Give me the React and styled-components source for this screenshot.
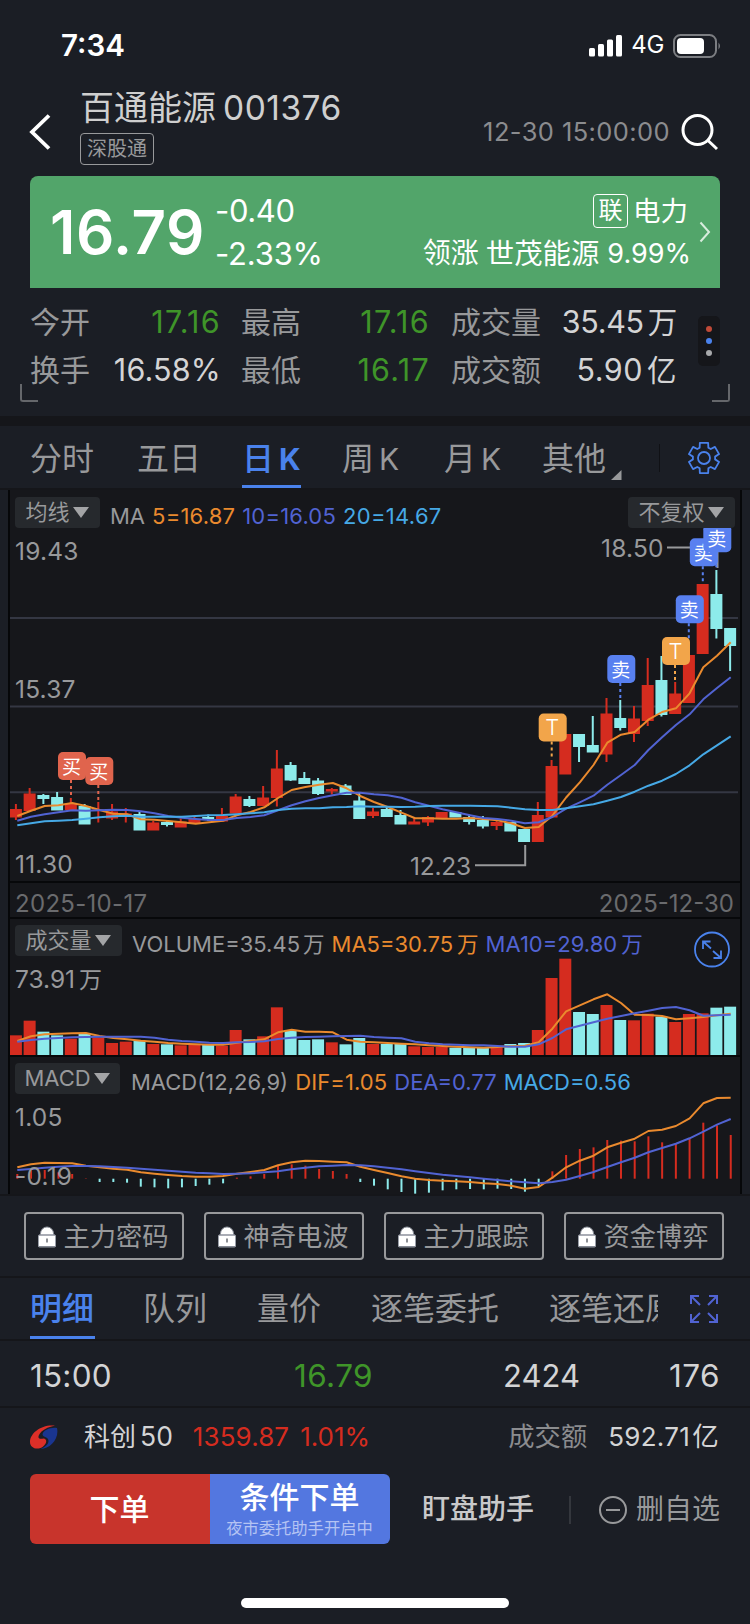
import React from 'react';
import styled, { createGlobalStyle } from 'styled-components';

const GlobalStyle = createGlobalStyle`
  * {
    box-sizing: border-box;
  }

  body {
    margin: 0;
    background: #1b1e25;
    font-family: Inter, "Noto Sans CJK SC", sans-serif;
  }
`;

const RED = '#d52c1f';
const CYAN = '#8debeb';
const ORANGE = '#ea8a2e';
const INDIGO = '#5163d2';
const SKY = '#46a9e6';

const Screen = styled.div`
  width: 750px;
  height: 1624px;
  overflow: hidden;
  background: #1b1e25;
  color: #d4d4d5;
  white-space: nowrap;
`;

const Text = styled.span`
  margin-left: ${p => p.$left || 0}px;
  margin-right: ${p => p.$right || 0}px;
  color: ${p => p.$color || 'inherit'};
  font-size: ${p => p.$size || 26}px;
  font-weight: ${p => p.$weight || 400};
  letter-spacing: ${p => p.$ls || 0}px;
  line-height: 1.2;
`;

const Unit = styled.span`
  margin-left: ${p => p.$left || 4}px;
  font-size: ${p => p.$size || 30}px;
`;

/* ---------- status bar + title ---------- */

const StatusBar = styled.div`
  display: flex;
  align-items: center;
  height: 88px;
  padding: 3px 28px 0 61px;
  color: #fff;

  svg {
    display: block;
  }
`;

const Spacer = styled.div`
  flex: 1;
`;

const TitleBar = styled.header`
  display: flex;
  align-items: center;
  height: 88px;
  padding: 0 31px 0 29px;
`;

const TitleBlock = styled.div`
  display: flex;
  flex-direction: column;
  align-items: flex-start;
  width: 290px;
  height: 88px;
  margin-left: 27px;
`;

const StockName = styled.h1`
  display: flex;
  align-items: center;
  gap: 7px;
  height: 41px;
  margin: 0 0 4px;
  color: #cfcfcf;
`;

const Tag = styled.span`
  display: flex;
  align-items: center;
  justify-content: center;
  width: 74px;
  height: 32px;
  border: 1px solid #98999b;
  border-radius: 4px;
  color: #98999b;
  font-size: 20px;
  line-height: 30px;
`;

/* ---------- quote ---------- */

const QuoteCard = styled.section`
  display: flex;
  align-items: center;
  height: 112px;
  margin: 0 30px;
  padding: 0 9px 0 20px;
  border-radius: 8px 8px 0 0;
  background: #52a56a;
  color: #fff;
`;

const Stack = styled.div`
  display: flex;
  flex-direction: column;
  align-items: ${p => (p.$end ? 'flex-end' : 'flex-start')};
  gap: 3px;
  height: 84px;
  margin-left: ${p => p.$left || 0}px;
  padding-top: 1px;
`;

const QuoteLine = styled.div`
  display: flex;
  align-items: center;
  gap: ${p => p.$gap || 0}px;
  height: 40px;
`;

const LinkBox = styled.span`
  display: flex;
  align-items: center;
  justify-content: center;
  width: 35px;
  height: 34px;
  border: 1px solid #fff;
  border-radius: 4px;
  font-size: 24px;
  line-height: 30px;
`;

const Chevron = styled.svg`
  margin-left: 8px;
`;

const Stats = styled.section`
  display: grid;
  grid-template-columns: 190px 21px 188px 22px 226px 21px 22px;
  height: 128px;
  padding: 10px 30px 0;
  grid-template-rows: 48px 48px;
`;

const Stat = styled.div`
  display: flex;
  align-items: center;
  justify-content: space-between;
  height: 48px;
  grid-column: ${p => p.$col};
`;

const MoreDots = styled.div`
  display: flex;
  flex-direction: column;
  align-items: center;
  justify-content: space-evenly;
  grid-column: 7;
  grid-row: 1 / 3;
  width: 22px;
  height: 50px;
  padding: 4px 0;
  margin-top: 18px;
  border-radius: 5px;
  background: #15161a;
`;

const Dot = styled.i`
  width: 6px;
  height: 6px;
  border-radius: 50%;
  background: ${p => p.$color};
`;

const Corners = styled.div`
  display: flex;
  justify-content: space-between;
  height: 18px;
  margin: -32px 20px 14px;
`;

const Corner = styled.i`
  width: 18px;
  height: 18px;
  border: 2px solid #65676b;
  border-top: 0;
  ${p => (p.$right ? 'border-left: 0; border-radius: 0 0 3px 0;' : 'border-right: 0; border-radius: 0 0 0 3px;')}
`;

const Band = styled.div`
  height: ${p => p.$h}px;
  background: #15161a;
`;

/* ---------- tabs ---------- */

const Tabs = styled.nav`
  display: flex;
  align-items: stretch;
  height: ${p => p.$h}px;
  padding-left: 30px;
`;

const Tab = styled.div`
  display: flex;
  align-items: center;
  gap: 5px;
  width: ${p => p.$w}px;
  margin-right: ${p => p.$gap || 0}px;
  padding-top: ${p => p.$top || 3}px;
  overflow: ${p => (p.$clip ? 'hidden' : 'visible')};
  border-bottom: 3px solid ${p => (p.$on ? '#4a82ec' : 'transparent')};
  color: ${p => (p.$on ? '#4a82ec' : '#98999b')};
  font-size: 32px;
  font-weight: ${p => (p.$on ? 500 : 400)};
  line-height: 40px;

  span {
    font-size: 30px;
    font-weight: ${p => (p.$on ? 700 : 400)};
  }
`;

const TabDivider = styled.i`
  width: 1px;
  height: 28px;
  margin: 18px 27px 0 37px;
  background: #101115;
`;

const TabIcon = styled.div`
  display: flex;
  align-items: center;
  margin-left: ${p => p.$left || 0}px;
  padding-top: ${p => p.$top || 0}px;
`;

/* ---------- charts ---------- */

const ChartBox = styled.section`
  margin: 0 8px;
  border: solid #060709;
  border-width: 0 2px;
  background: #16171b;
`;

const Pane = styled.div`
  display: grid;
  height: ${p => p.$h}px;
  overflow: hidden;
  border-bottom: ${p => (p.$last ? 0 : 2)}px solid #07080a;

  > * {
    grid-area: 1 / 1;
  }
`;

const PaneHead = styled.div`
  display: flex;
  align-items: center;
  height: 31px;
  margin-top: ${p => p.$top || 6}px;
  padding: 0 5px;
  z-index: 1;
`;

const Pill = styled.span`
  display: flex;
  align-items: center;
  justify-content: center;
  gap: 3px;
  width: ${p => p.$w}px;
  height: 31px;
  padding: 0 1px 1px 0;
  border-radius: 4px;
  background: #26292d;
  color: #98999b;
  font-size: 22px;
  line-height: 28px;

  &::after {
    content: "";
    border: solid transparent;
    border-width: 11px 8px 0;
    border-top-color: #a3a4a6;
  }
`;

const Legend = styled.div`
  display: flex;
  gap: 7px;
  margin-left: ${p => p.$left || 10}px;
  padding-top: 7px;
`;

const DateRow = styled.div`
  display: flex;
  align-items: center;
  justify-content: space-between;
  height: 36px;
  padding: 9px 6px 0 5px;
  border-bottom: 2px solid #07080a;
`;

/* ---------- lower part ---------- */

const LockRow = styled.div`
  display: grid;
  grid-template-columns: repeat(4, 160px);
  gap: 20px;
  height: 80px;
  padding: 16px 24px 0;
`;

const LockButton = styled.button`
  display: flex;
  align-items: center;
  justify-content: center;
  gap: 7px;
  height: 48px;
  padding: 1px 1px 0 0;
  border: 2px solid #98999b;
  border-radius: 4px;
  background: none;
  color: #98999b;
  font: 400 26.3px/36px Inter, "Noto Sans CJK SC", sans-serif;
`;

const TradeRow = styled.div`
  display: grid;
  grid-template-columns: 161px 182px 207px 1fr;
  align-items: center;
  height: 65px;
  padding: 4px 30px 0;
  text-align: right;

  > :first-child {
    text-align: left;
  }
`;

const IndexRow = styled.div`
  display: flex;
  align-items: center;
  height: 66px;
  padding: 0 31px 9px 30px;
`;

const Actions = styled.footer`
  display: flex;
  align-items: center;
  height: 70px;
  padding: 0 30px;
`;

const Order = styled.button`
  display: flex;
  flex-direction: column;
  align-items: center;
  justify-content: center;
  width: 180px;
  height: 70px;
  padding: 0 1px 0 0;
  border: 0;
  border-radius: ${p => (p.$blue ? '0 6px 6px 0' : '6px 0 0 6px')};
  background: ${p => (p.$blue ? '#5377e0' : '#c8342c')};
  color: #fff;
  font: 500 30px/37px Inter, "Noto Sans CJK SC", sans-serif;

  small {
    color: #b4c3f3;
    font-size: 16.3px;
    font-weight: 400;
    line-height: 24px;
  }
`;

const SideActions = styled.div`
  display: flex;
  align-items: center;
  flex: 1;
  padding: 2px 0 0 32px;
`;

const ActionDivider = styled.i`
  width: 2px;
  height: 28px;
  margin: 0 27px 0 35px;
  background: #34373d;
`;

const HomeBar = styled.div`
  width: 268px;
  height: 10px;
  margin: 54px auto 0;
  border-radius: 5px;
  background: #fff;
`;

/* ---------- chart data ---------- */

// [up, open/close top, bottom, high, low]
const candles = [
  [1, 809, 817.5, 804, 820], [1, 793.5, 811, 788, 811], [0, 795, 799, 794, 804], [0, 797, 810.5, 792, 810],
  [1, 804, 810, 798, 810], [0, 806, 824.5, 804, 824], [1, 809.5, 811, 802, 822.5], [1, 811.5, 818.5, 804, 820],
  [1, 813.5, 815, 808, 822.5], [0, 814, 830.5, 812, 830], [1, 822.5, 830.5, 821, 830], [0, 822, 825, 820, 826.5],
  [1, 821.5, 827.5, 818.5, 827], [1, 819, 824, 816.5, 824], [0, 817, 820, 814.5, 821], [1, 816, 821.5, 808, 821],
  [1, 796.5, 813.5, 794, 813], [0, 799, 806, 796, 807], [1, 797.5, 806, 786, 806], [1, 768.5, 798, 750, 806.5],
  [0, 765, 780.5, 762, 781], [0, 778, 784, 772, 784], [0, 780.5, 794, 778, 795], [1, 789, 791.5, 788, 794.5],
  [0, 785.5, 795, 784, 795], [0, 800.5, 819, 793, 819], [1, 811.5, 816, 808, 818], [0, 809, 817, 806.5, 817],
  [0, 815, 824.5, 810, 824], [1, 821.5, 824.5, 818, 824], [1, 817, 822.5, 816, 826], [1, 812, 818, 812, 818],
  [0, 812, 817.5, 812, 817], [0, 817, 822, 815, 824.5], [0, 820, 826.5, 816, 828.5], [1, 822, 826, 820, 830],
  [0, 822, 831.5, 822, 831], [0, 829, 842, 829, 842], [1, 815, 842, 802, 842], [1, 766, 817.5, 760, 817],
  [1, 734, 774.5, 734, 774], [0, 734, 747, 734, 762], [0, 745, 752.5, 716, 752], [1, 713.5, 754.5, 698, 762],
  [0, 718, 728, 700, 730.5], [1, 718.5, 734, 706, 742], [1, 685, 721, 658, 726], [0, 680, 715, 656, 716.5],
  [1, 693.5, 714, 682, 714], [1, 655, 703, 655, 703], [1, 584, 654, 584, 654], [0, 594, 629, 570, 638.5],
  [0, 628, 646, 628, 671],
];

const ma5 = [816, 810.7, 806, 805.3, 803, 806, 810, 813.7, 814.3, 819.3, 819.7, 821, 822.3, 823.7, 822.3, 820.7, 815.3,
  812, 807.3, 798, 790, 787, 784.7, 783, 788.3, 796, 802, 807, 812.7, 818.3, 818.3, 818.7, 818.7, 818, 819, 820.3,
  823.3, 828, 827, 815.7, 797.5, 782.3, 765, 742.7, 734.7, 732, 719.7, 712, 708.3, 693.3, 667.3, 655.7, 642.3];
const ma10 = [820.7, 816.7, 814.3, 812.3, 810.3, 810.7, 810.3, 809.7, 810, 811.3, 813.3, 816, 817.7, 819, 820, 820, 818,
  817, 815.3, 810.3, 805.3, 801.3, 798, 795.3, 792.7, 792.7, 794.3, 795.3, 797.7, 802.3, 805.7, 809.3, 812.3, 815.3,
  818, 819, 820.7, 823.3, 822.3, 817, 808.7, 802.3, 795.7, 784.7, 775, 765, 750, 737.3, 725, 714.3, 699.3, 688, 677.3];
const ma20 = [825.3, 823.3, 821.3, 820.7, 820, 818.7, 817.3, 816.3, 815.7, 816.7, 816.7, 816.7, 816.7, 816, 815.3, 815,
  814.3, 813.3, 812.3, 810, 808.7, 808.3, 808.3, 807.3, 807, 806.3, 806.7, 806.7, 807, 806.7, 806, 805.7, 805.7, 805.7,
  806, 806.3, 807.7, 809.3, 810, 810, 808.3, 806.3, 804.3, 800.7, 797, 791.7, 785.7, 780.7, 774, 765.3, 754.3, 745.3,
  736.3];

// the two lower panes are kept in thirds of a pixel below y=915
const third = v => 915 + v / 3;

const volume = [361, 317, 350, 361, 371, 356, 368, 384, 380, 377, 387, 388, 391, 390, 387, 392, 345, 373, 364, 277, 345,
  375, 373, 382, 388, 369, 387, 387, 387, 394, 396, 396, 398, 398, 398, 396, 387, 384, 345, 189, 131, 291, 297, 270,
  315, 316, 296, 305, 321, 297, 295, 278, 275].map(third);
const vol5 = [378, 364, 358, 356, 355, 354, 363, 369, 373, 377, 380, 384, 386, 388, 389, 389, 383, 378, 373, 352, 344,
  350, 350, 352, 374, 380, 382, 384, 386, 388, 391, 393, 395, 397, 398, 396, 394, 392, 382, 341, 289, 271, 253, 238,
  264, 299, 300, 303, 313, 310, 306, 301, 296].map(third);
const vol10 = [380, 375, 371, 369, 367, 366, 365, 365, 365, 365, 368, 374, 378, 380, 383, 384, 382, 381, 379, 372, 368,
  366, 365, 364, 363, 362, 366, 368, 370, 380, 385, 388, 389, 391, 391, 393, 395, 395, 388, 369, 343, 332, 322, 311,
  303, 295, 287, 279, 276, 286, 302, 301, 299].map(third);
const dif = [757, 748, 743, 744, 745, 752, 757, 761, 764, 772, 776, 780, 783, 785, 785, 783, 776, 771, 765, 751, 742,
  737, 738, 740, 742, 755, 765, 774, 784, 791, 795, 797, 799, 801, 805, 807, 812, 821, 816, 788, 757, 737, 722, 697,
  683, 671, 648, 644, 633, 610, 565, 549, 548].map(third);
const dea = [765, 762, 758, 755, 753, 753, 754, 756, 758, 761, 764, 767, 770, 773, 775, 777, 776, 775, 772, 769, 763,
  758, 754, 752, 750, 751, 754, 758, 763, 769, 774, 779, 783, 787, 791, 795, 799, 802, 805, 801, 794, 783, 771, 756,
  742, 728, 712, 699, 686, 670, 650, 629, 612].map(third);
const hist = [777, 764, 765, 772, 777, 790, 801, 801, 803, 815, 817, 820, 817, 813, 809, 805, 788, 784, 777, 752, 748,
  752, 762, 768, 777, 801, 812, 823, 831, 836, 833, 826, 823, 822, 823, 821, 822, 830, 815, 769, 720, 702, 697, 675,
  677, 679, 664, 682, 686, 671, 623, 631, 660].map(third);

const markers = [
  { x: 72, y: 766, c: '#e0644d', t: '买', to: 796 },
  { x: 99.3, y: 771, c: '#e0644d', t: '买', to: 802 },
  { x: 552.7, y: 727.5, c: '#f2a54a', t: 'T', to: 757 },
  { x: 621.3, y: 669, c: '#5880f0', t: '卖', to: 699 },
  { x: 689.8, y: 609.3, c: '#5880f0', t: '卖', to: 639 },
  { x: 676, y: 651, c: '#f2a54a', t: 'T', to: 682 },
  { x: 703.8, y: 552.3, c: '#5880f0', t: '卖', to: 582 },
  { x: 717.3, y: 538.3, c: '#5880f0', t: '卖', to: 568 },
];

const barX = i => 15.9 + i * 13.735;
const lineX = i => 17.3 + i * 13.72;

const Curve = ({ data, color }) => (
  <polyline
    points={data.map((y, i) => `${lineX(i).toFixed(1)},${y.toFixed(1)}`).join(' ')}
    fill="none"
    stroke={color}
    strokeWidth="2"
    strokeLinejoin="round"
  />
);

const AxisText = ({ x, y, ls = 0.2, children }) => (
  <text x={x} y={y} fill="#98999b" fontSize="24.5" letterSpacing={ls}>
    {children}
  </text>
);

const PriceChart = () => (
  <svg width="730" height="391" viewBox="10 490 730 391">
    {[618, 706.5, 792.3].map(y => (
      <line key={y} x1="10" x2="738" y1={y} y2={y} stroke="#343743" strokeWidth="2" />
    ))}
    <AxisText x={15} y={560}>19.43</AxisText>
    <AxisText x={15} y={698}>15.37</AxisText>
    <AxisText x={15} y={873}>11.30</AxisText>
    {candles.map(([up, top, bottom, high, low], i) => (
      <g key={i} fill={up ? RED : CYAN}>
        <rect x={barX(i) - 1} y={high} width="2" height={low - high} />
        <rect x={barX(i) - 6} y={top} width="12" height={bottom - top} />
      </g>
    ))}
    <Curve data={ma5} color={ORANGE} />
    <Curve data={ma10} color={INDIGO} />
    <Curve data={ma20} color={SKY} />
    <AxisText x={601} y={557}>18.50</AxisText>
    <AxisText x={410} y={875} ls={-0.2}>12.23</AxisText>
    <path d="M667 547.5H717.5V568M475 865.3H525.2V845" fill="none" stroke="#98999b" strokeWidth="2" />
    {markers.map(m => (
      <g key={m.x}>
        <line x1={m.x - 1} x2={m.x - 1} y1={m.y + 14} y2={m.to} stroke={m.c} strokeWidth="2" strokeDasharray="3 3" />
        <rect x={m.x - 14} y={m.y - 14} width="28" height="28" rx="5" fill={m.c} />
        <text
          x={m.x - 0.5}
          y={m.y + 7.5}
          fill="#fff"
          fontSize={m.t === 'T' ? 22 : 19}
          fontWeight={m.t === 'T' ? 300 : 400}
          textAnchor="middle"
        >
          {m.t}
        </text>
      </g>
    ))}
  </svg>
);

const VolumeChart = () => (
  <svg width="730" height="136" viewBox="10 919 730 136">
    <AxisText x={15} y={988} ls={0}>73.91<tspan dx="4" fontSize="23">万</tspan></AxisText>
    {volume.map((y, i) => (
      <rect key={i} x={barX(i) - 6} y={y} width="12" height={1055 - y} fill={candles[i][0] ? RED : CYAN} />
    ))}
    <Curve data={vol5} color={ORANGE} />
    <Curve data={vol10} color={INDIGO} />
    <g fill="none" stroke="#4a82ec" strokeWidth="1.8">
      <circle cx="712" cy="949.5" r="17" />
      <path d="M703 949v-7.500h7.500M703 941.500l8 7M721 950.500v7.500h-7.500M721 958l-8-7" />
    </g>
  </svg>
);

const MacdChart = () => (
  <svg width="730" height="137" viewBox="10 1057 730 137">
    {hist.map((y, i) => (
      <rect
        key={i}
        x={lineX(i) - 1}
        y={Math.min(y, 1178.7)}
        width="2"
        height={Math.abs(y - 1178.7)}
        fill={y < 1178.7 ? RED : CYAN}
      />
    ))}
    <Curve data={dif} color={ORANGE} />
    <Curve data={dea} color={INDIGO} />
    <AxisText x={15} y={1126}>1.05</AxisText>
    <AxisText x={15} y={1185}>-0.19</AxisText>
  </svg>
);

/* ---------- icons ---------- */

const SignalIcon = () => (
  <svg width="33" height="22" viewBox="0 0 33 22" fill="#fff">
    <rect x="0" y="13" width="6" height="8.500" rx="1.500" />
    <rect x="9" y="9" width="6" height="12.500" rx="1.500" />
    <rect x="18" y="4.500" width="6" height="17" rx="1.500" />
    <rect x="27" y="0" width="6" height="21.500" rx="1.500" />
  </svg>
);

const BatteryIcon = () => (
  <svg width="49" height="24" viewBox="0 0 49 24">
    <rect x="1" y="1" width="42" height="22" rx="6.500" fill="none" stroke="#7c7e82" strokeWidth="2" />
    <rect x="4" y="4" width="27" height="16" rx="4" fill="#fff" />
    <path d="M45.500 8.500q3 3.500 0 7z" fill="#7c7e82" />
  </svg>
);

const BackIcon = () => (
  <svg width="24" height="38" viewBox="0 0 24 38" fill="none" stroke="#fff" strokeWidth="3.800">
    <path d="M20 2.500L3 19l17 16.500" />
  </svg>
);

const SearchIcon = () => (
  <svg width="38" height="38" viewBox="0 0 38 38" fill="none" stroke="#fff" strokeWidth="3">
    <circle cx="16.500" cy="17" r="14.500" />
    <path d="M27 27.500l9 8.500" />
  </svg>
);

// six flat teeth around the hub
const gearPath = () => {
  const steps = [];
  for (let k = 0; k < 6; k += 1) {
    const base = (k * 60 - 90) * (Math.PI / 180);
    [[-0.4, 11.2], [-0.27, 15.6], [0.27, 15.6], [0.4, 11.2]].forEach(([da, r]) => {
      steps.push(`${(17 + r * Math.cos(base + da)).toFixed(2)} ${(17 + r * Math.sin(base + da)).toFixed(2)}`);
    });
  }
  return `M${steps.join('L')}Z`;
};

const GearIcon = () => (
  <svg width="34" height="34" viewBox="0 0 34 34" fill="none" stroke="#4a82ec" strokeWidth="1.8" strokeLinejoin="round">
    <path d={gearPath()} />
    <circle cx="17" cy="17" r="6" />
  </svg>
);

const LockIcon = () => (
  <svg width="18" height="22" viewBox="0 0 18 22">
    <path d="M2.500 10V7.500a6.500 6.500 0 0113 0V10z" fill="#fff" stroke="#8f949e" strokeWidth="1" />
    <rect x="0.500" y="9" width="17" height="12" rx="1" fill="#fff" stroke="#9a9fa9" />
    <path d="M1 9h16M1 20.500h16" stroke="#858a95" strokeWidth="1.200" />
    <rect x="8.200" y="12.500" width="1.600" height="4" fill="#70747c" />
  </svg>
);

const ExpandIcon = () => (
  <svg width="30" height="30" viewBox="0 0 30 30" fill="none" stroke="#5163d2" strokeWidth="2">
    <path d="M2 10V2h8M2 2l9 9M20 2h8v8M28 2l-9 9M2 20v8h8M2 28l9-9M28 20v8h-8M28 28l-9-9" />
  </svg>
);

const IndexLogo = () => (
  <svg width="28" height="24" viewBox="0 0 28 24">
    <path d="M27 3C21 2 13 5 12.500 9.500C13 12.500 18.500 11.500 18.500 16C18.500 19.500 15 22 10.500 24C20 24 29.500 14 27 3Z" fill="#1a3590" />
    <path d="M25 .8C12-1 0 8 0 17C0 23 7 25.500 12.500 22C17 19 17.500 14 13.500 13.500C9 14.500 7.500 13 9 10C11.500 5 18 2 25 .8Z" fill="#dd2f28" />
  </svg>
);

const MinusIcon = () => (
  <svg width="30" height="30" viewBox="0 0 30 30" fill="none" stroke="#98999b" strokeWidth="2">
    <circle cx="15" cy="15" r="13" />
    <path d="M8 15h14" />
  </svg>
);

const stats = [
  { label: '今开', value: '17.16', col: 1, green: true, ls: 1.3 },
  { label: '最高', value: '17.16', col: 3, green: true, ls: 1.3 },
  { label: '成交量', value: '35.45', unit: '万', col: 5, ls: -0.3 },
  { label: '换手', value: '16.58%', col: 1, ls: 0.2 },
  { label: '最低', value: '16.17', col: 3, green: true, ls: 1.3 },
  { label: '成交额', value: '5.90', unit: '亿', col: 5, ls: 0.5 },
];

const App = () => (
  <>
    <GlobalStyle />
    <Screen>
      <StatusBar>
        <Text $size={29.5} $weight={600}>7:34</Text>
        <Spacer />
        <SignalIcon />
        <Text $size={24} $ls={-0.3} $left={9} $right={9}>4G</Text>
        <BatteryIcon />
      </StatusBar>

      <TitleBar>
        <BackIcon />
        <TitleBlock>
          <StockName>
            <Text $size={34}>百通能源</Text>
            <Text $size={33.5} $ls={0.5}>001376</Text>
          </StockName>
          <Tag>深股通</Tag>
        </TitleBlock>
        <Spacer />
        <Text $size={25.5} $color="#8b8c8f" $ls={0.4} $right={11}>12-30 15:00:00</Text>
        <SearchIcon />
      </TitleBar>

      <QuoteCard>
        <Text $size={60} $weight={600} $ls={0.6}>16.79</Text>
        <Stack $left={10}>
          <QuoteLine><Text $size={31} $ls={-0.4}>-0.40</Text></QuoteLine>
          <QuoteLine><Text $size={31} $ls={-0.2}>-2.33%</Text></QuoteLine>
        </Stack>
        <Spacer />
        <Stack $end>
          <QuoteLine $gap={5}>
            <LinkBox>联</LinkBox>
            <Text $size={27.5} $right={3}>电力</Text>
          </QuoteLine>
          <QuoteLine $gap={7}>
            <Text $size={28}>领涨</Text>
            <Text $size={28.4}>世茂能源</Text>
            <Text $size={27} $left={1}>9.99%</Text>
          </QuoteLine>
        </Stack>
        <Chevron width="12" height="22" viewBox="0 0 12 22" fill="none" stroke="#d8ecdd" strokeWidth="2">
          <path d="M1.500 1.500L10 11l-8.500 9.500" />
        </Chevron>
      </QuoteCard>

      <Stats>
        {stats.map(s => (
          <Stat key={s.label} $col={s.col}>
            <Text $size={30} $color="#98999b">{s.label}</Text>
            <Text $size={30.5} $ls={s.ls} $right={s.unit ? 0 : -1} $color={s.green ? '#3f9529' : '#d4d4d5'}>
              {s.value}
              {s.unit && <Unit $left={4} $size={29.5}>{s.unit}</Unit>}
            </Text>
          </Stat>
        ))}
        <MoreDots>
          <Dot $color="#c04a38" />
          <Dot $color="#4a82ec" />
          <Dot $color="#a8a9ab" />
        </MoreDots>
      </Stats>
      <Corners>
        <Corner />
        <Corner $right />
      </Corners>
      <Band $h={10} />

      <Tabs $h={62}>
        <Tab $w={64} $gap={43} $top={6}>分时</Tab>
        <Tab $w={65} $gap={40} $top={6}>五日</Tab>
        <Tab $w={59} $gap={41} $top={6} $on>日<span>K</span></Tab>
        <Tab $w={59} $gap={43} $top={6}>周<span>K</span></Tab>
        <Tab $w={59} $gap={39} $top={6}>月<span>K</span></Tab>
        <Tab $w={65} $top={6}>其他</Tab>
        <TabIcon $left={4} $top={36}>
          <svg width="11" height="10" viewBox="0 0 11 10">
            <path d="M10.500 0v10H0z" fill="#98999b" />
          </svg>
        </TabIcon>
        <TabDivider />
        <TabIcon $top={1}><GearIcon /></TabIcon>
      </Tabs>
      <Band $h={2} />

      <ChartBox>
        <Pane $h={393}>
          <PriceChart />
          <PaneHead $top={7}>
            <Pill $w={85}>均线</Pill>
            <Legend>
              <Text $size={22} $color="#98999b">MA</Text>
              <Text $size={22} $ls={0.2} $color={ORANGE}>5=16.87</Text>
              <Text $size={22} $ls={0.2} $color={INDIGO}>10=16.05</Text>
              <Text $size={22} $ls={0.3} $color={SKY}>20=14.67</Text>
            </Legend>
            <Spacer />
            <Pill $w={107}>不复权</Pill>
          </PaneHead>
        </Pane>
        <DateRow>
          <Text $size={24} $color="#6a6b6e" $ls={0.3}>2025-10-17</Text>
          <Text $size={24} $color="#6a6b6e">2025-12-30</Text>
        </DateRow>
        <Pane $h={138}>
          <VolumeChart />
          <PaneHead>
            <Pill $w={107}>成交量</Pill>
            <Legend>
              <Text $size={22} $color="#98999b">VOLUME=35.45<Unit $left={3} $size={21.5}>万</Unit></Text>
              <Text $size={22} $color={ORANGE}>MA5=30.75<Unit $size={21.5}>万</Unit></Text>
              <Text $size={22} $color={INDIGO}>MA10=29.80<Unit $size={21.5}>万</Unit></Text>
            </Legend>
          </PaneHead>
        </Pane>
        <Pane $h={137} $last>
          <MacdChart />
          <PaneHead>
            <Pill $w={105}>MACD</Pill>
            <Legend $left={11}>
              <Text $size={22} $color="#98999b">MACD(12,26,9)</Text>
              <Text $size={22} $ls={0.1} $color={ORANGE}>DIF=1.05</Text>
              <Text $size={22} $color={INDIGO}>DEA=0.77</Text>
              <Text $size={22} $color={SKY}>MACD=0.56</Text>
            </Legend>
          </PaneHead>
        </Pane>
      </ChartBox>
      <Band $h={2} />

      <LockRow>
        {['主力密码', '神奇电波', '主力跟踪', '资金博弈'].map(name => (
          <LockButton key={name}>
            <LockIcon />
            {name}
          </LockButton>
        ))}
      </LockRow>
      <Band $h={2} />

      <Tabs $h={61}>
        <Tab $w={65} $gap={48} $on>明细</Tab>
        <Tab $w={65} $gap={49}>队列</Tab>
        <Tab $w={65} $gap={49}>量价</Tab>
        <Tab $w={130} $gap={48}>逐笔委托</Tab>
        <Tab $w={109} $clip>逐笔还原</Tab>
        <TabIcon $left={31}><ExpandIcon /></TabIcon>
      </Tabs>
      <Band $h={2} />

      <TradeRow>
        <Text $size={31.5} $ls={0.2}>15:00</Text>
        <Text $size={31.5} $ls={0.4} $color="#3f9529">16.79</Text>
        <Text $size={31}>2424</Text>
        <Text $size={31.5} $ls={0.4}>176</Text>
      </TradeRow>
      <Band $h={2} />

      <IndexRow>
        <IndexLogo />
        <Text $size={26} $left={26}>科创</Text>
        <Text $size={26.5} $left={4}>50</Text>
        <Text $size={26} $color={RED} $left={20} $ls={0.1}>1359.87</Text>
        <Text $size={26} $color={RED} $left={11}>1.01%</Text>
        <Spacer />
        <Text $size={26.3} $color="#8b8c8f">成交额</Text>
        <Text $size={26} $left={21} $ls={0.3}>592.71<Unit $left={2} $size={26.5}>亿</Unit></Text>
      </IndexRow>

      <Actions>
        <Order>下单</Order>
        <Order $blue>
          条件下单
          <small>夜市委托助手开启中</small>
        </Order>
        <SideActions>
          <Text $size={28} $weight={500} $color="#c9c9ca">盯盘助手</Text>
          <ActionDivider />
          <MinusIcon />
          <Text $size={28} $color="#98999b" $left={8}>删自选</Text>
        </SideActions>
      </Actions>
      <HomeBar />
    </Screen>
  </>
);

export default App;
